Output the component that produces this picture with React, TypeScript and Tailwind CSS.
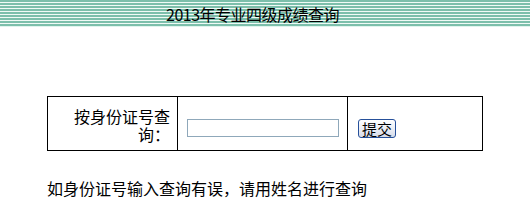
import React from "react";

export default function App() {
  const font = { fontFamily: '"Noto Sans CJK SC", "Noto Sans", sans-serif' };
  return (
    <div className="w-[530px] h-[224px] bg-white text-black" style={font}>
      <div className="h-[26px] bg-[repeating-linear-gradient(to_bottom,#7cbfab_0px,#7cbfab_2px,#f0faf6_2px,#f0faf6_3px)] pl-[166px] flex items-center">
        <span className="text-[16px] leading-[18px] tracking-[-0.5px] pt-[2px]">2013年专业四级成绩查询</span>
      </div>
      <div className="h-px bg-[#dff5ee]" />
      <div className="pt-[69px] pl-[47px]">
        <div className="grid grid-cols-[130px_170px_136px] w-[436px] h-[55px] border border-black">
          <div className="border-r border-black flex items-center justify-end pr-[7px] pl-[26px] pt-[2px]">
            <p className="text-right text-[16px] leading-[18px] w-[97px]">按身份证号查询：</p>
          </div>
          <div className="border-r border-black flex items-center pl-[9px] pt-[8px]">
            <input className="w-[152px] h-[18px] border border-[#8fa8ba] bg-white outline-none" />
          </div>
          <div className="flex items-center pl-[10px] pt-[9px]">
            <button className="w-[38px] h-[19px] rounded-[3px] border border-[#26509a] bg-[linear-gradient(to_bottom,#ffffff,#e9ecf4_60%,#d6dcea)] text-[15px] leading-[15px] flex items-center justify-center">
              提交
            </button>
          </div>
        </div>
        <div className="pt-[28px] text-[16px] leading-[18px]">如身份证号输入查询有误，请用姓名进行查询</div>
      </div>
    </div>
  );
}
